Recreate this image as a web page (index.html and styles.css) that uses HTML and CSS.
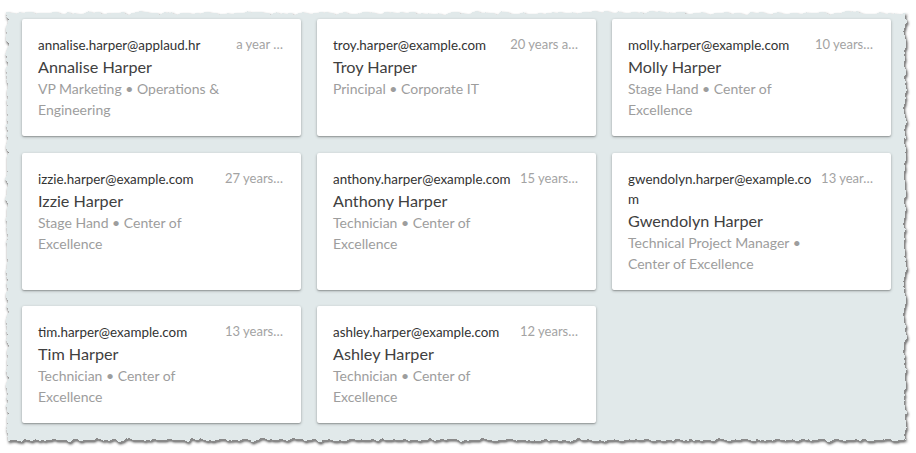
FILE: index.html
```html
<!DOCTYPE html>
<html lang="en">
<head>
<meta charset="utf-8">
<title>People</title>
<link rel="stylesheet" href="styles.css">
</head>
<body>
<div class="page">
  <div class="grid">
    <div class="card">
      <div class="top"><span class="email">annalise.harper@applaud.hr</span><span class="time">a year …</span></div>
      <div class="name">Annalise Harper</div>
      <div class="meta">VP Marketing • Operations &amp; Engineering</div>
    </div>
    <div class="card">
      <div class="top"><span class="email">troy.harper@example.com</span><span class="time">20 years a…</span></div>
      <div class="name">Troy Harper</div>
      <div class="meta">Principal • Corporate IT</div>
    </div>
    <div class="card">
      <div class="top"><span class="email">molly.harper@example.com</span><span class="time">10 years…</span></div>
      <div class="name">Molly Harper</div>
      <div class="meta">Stage Hand • Center of Excellence</div>
    </div>
    <div class="card">
      <div class="top"><span class="email">izzie.harper@example.com</span><span class="time">27 years…</span></div>
      <div class="name">Izzie Harper</div>
      <div class="meta">Stage Hand • Center of Excellence</div>
    </div>
    <div class="card">
      <div class="top"><span class="email">anthony.harper@example.com</span><span class="time">15 years…</span></div>
      <div class="name">Anthony Harper</div>
      <div class="meta">Technician • Center of Excellence</div>
    </div>
    <div class="card">
      <div class="top"><span class="email">gwendolyn.harper@example.com</span><span class="time">13 year…</span></div>
      <div class="name">Gwendolyn Harper</div>
      <div class="meta">Technical Project Manager • Center of Excellence</div>
    </div>
    <div class="card">
      <div class="top"><span class="email">tim.harper@example.com</span><span class="time">13 years…</span></div>
      <div class="name">Tim Harper</div>
      <div class="meta">Technician • Center of Excellence</div>
    </div>
    <div class="card">
      <div class="top"><span class="email">ashley.harper@example.com</span><span class="time">12 years…</span></div>
      <div class="name">Ashley Harper</div>
      <div class="meta">Technician • Center of Excellence</div>
    </div>
  </div>
</div>
</body>
</html>
```
FILE: styles.css
```css
html, body {
  margin: 0;
  padding: 0;
  background: #ffffff;
}
body {
  font-family: Lato, "Noto Sans", "Liberation Sans", sans-serif;
}
.page {
  width: 916px;
  height: 453px;
  box-sizing: border-box;
  padding: 19px 0 0 22px;
  background-repeat: no-repeat;
  background-image: url("data:image/svg+xml,%3Csvg xmlns='http://www.w3.org/2000/svg' width='916' height='453'%3E%3Cdefs%3E%3Cfilter id='t' x='-3%25' y='-5%25' width='106%25' height='110%25'%3E%3CfeTurbulence type='fractalNoise' baseFrequency='0.12' numOctaves='3' seed='7' result='n'/%3E%3CfeDisplacementMap in='SourceGraphic' in2='n' scale='7' xChannelSelector='R' yChannelSelector='G' result='d'/%3E%3CfeGaussianBlur in='d' stdDeviation='1.6' result='b'/%3E%3CfeOffset in='b' dx='1' dy='1.5' result='o'/%3E%3CfeColorMatrix in='o' type='matrix' values='0 0 0 0 0.25  0 0 0 0 0.25  0 0 0 0 0.25  0 0 0 1.8 0' result='s'/%3E%3CfeMerge%3E%3CfeMergeNode in='s'/%3E%3CfeMergeNode in='d'/%3E%3C/feMerge%3E%3C/filter%3E%3C/defs%3E%3Crect x='7' y='13' width='898' height='427' fill='%23e1e9ea' filter='url(%23t)'/%3E%3C/svg%3E");
}
.grid {
  display: grid;
  grid-template-columns: repeat(3, 279px);
  column-gap: 16px;
  row-gap: 16.5px;
}
.card {
  background: #ffffff;
  border-radius: 2px;
  box-shadow: 0 1px 3px rgba(0, 0, 0, 0.3), 0 1px 1px rgba(0, 0, 0, 0.14);
  padding: 16px;
}
.top {
  display: flex;
  align-items: flex-start;
}
.email {
  flex: 1 1 auto;
  min-width: 0;
  font-size: 13.4px;
  line-height: 20px;
  color: #333333;
  word-break: break-all;
}
.time {
  flex: 0 0 auto;
  margin-left: 4px;
  padding-right: 2px;
  font-size: 13px;
  line-height: 18px;
  color: #a3a3a3;
  white-space: nowrap;
}
.name {
  font-size: 16.2px;
  line-height: 23px;
  color: #404040;
}
.meta {
  font-size: 14px;
  line-height: 21px;
  color: #9d9d9d;
  padding-right: 60px;
}
```
